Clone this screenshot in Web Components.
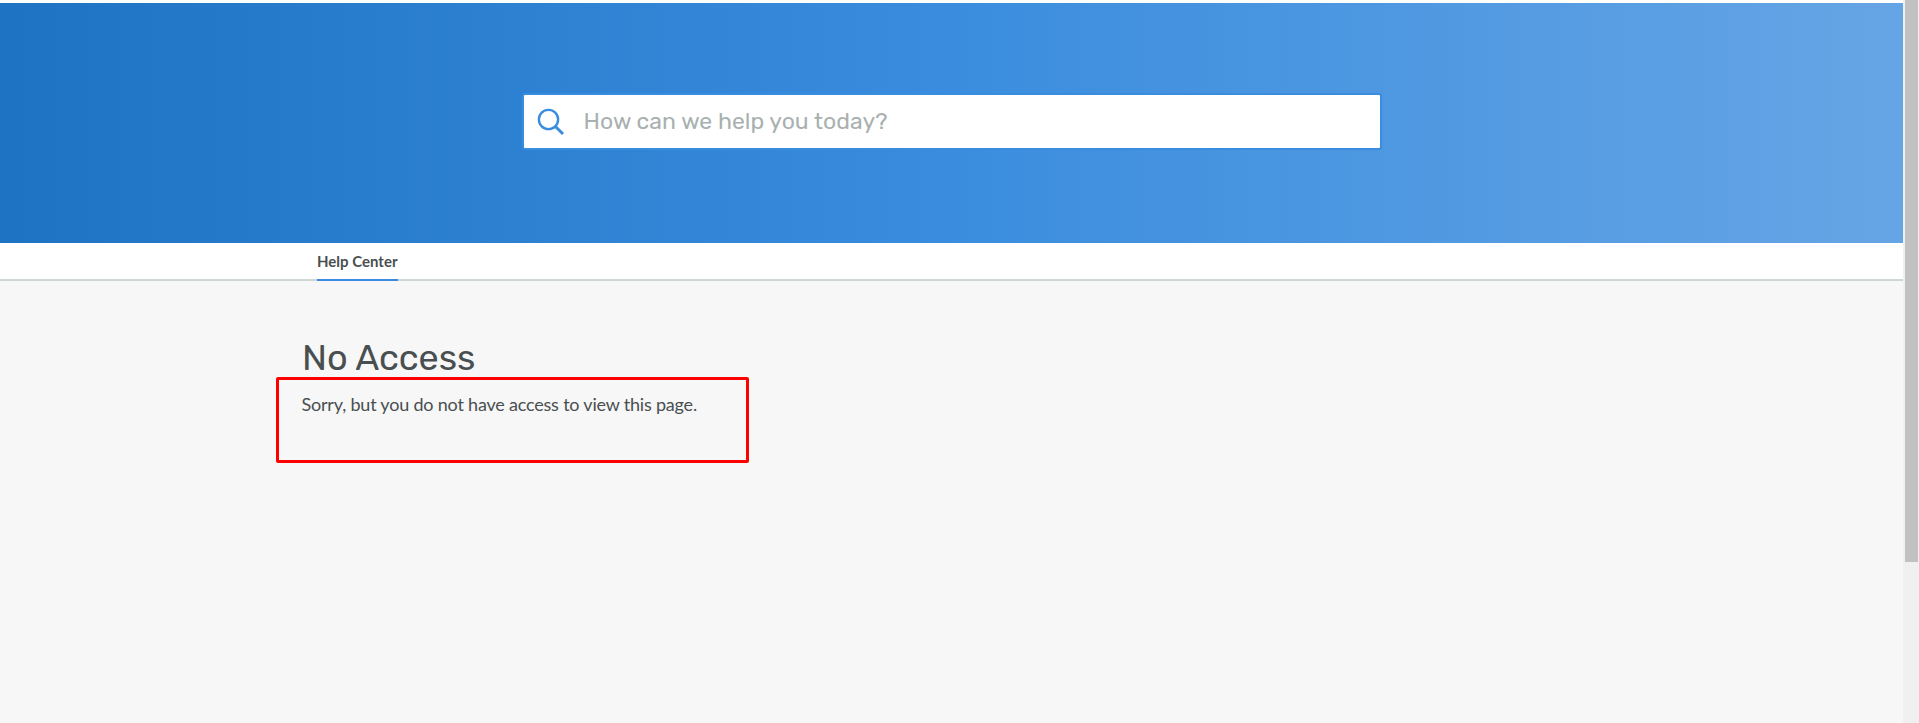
<!DOCTYPE html>
<html lang="en">
<head>
<meta charset="utf-8">
<title>Help Center</title>
<style>
html, body { margin: 0; height: 100%; overflow: hidden; background: #f7f7f7; }
</style>
</head>
<body>
<help-page></help-page>
<script>
const define = (name, html) => customElements.define(name, class extends HTMLElement {
  constructor() {
    super();
    const t = document.createElement('template');
    t.innerHTML = html;
    this.attachShadow({ mode: 'open' }).append(t.content.cloneNode(true));
  }
});

define('search-box', `<style>
:host { display: flex; box-sizing: border-box; width: 860px; height: 57px; align-items: center; background: #fff; border: 2px solid #3a8dde; border-radius: 3px; }
svg { display: block; width: 28px; height: 28px; margin-left: 13px; margin-right: 19px; flex: none; }
span { font: 23px/30px Rubik, Roboto, sans-serif; letter-spacing: .04px; color: #a8b0b0; white-space: nowrap; margin-top: -1px; }
</style>
<svg viewBox="0 0 28 28" fill="none" stroke="#3a8dde"><circle cx="11.5" cy="11.5" r="9.6" stroke-width="2.4"/><path d="M18.7 18.7L26 26" stroke-width="3"/></svg>
<span><slot></slot></span>`);

define('hero-banner', `<style>
:host { display: flex; height: 240px; box-sizing: border-box; padding-top: 90px; justify-content: center; align-items: flex-start; background: linear-gradient(90deg, #1f73c3 0%, #3a8dde 50%, #66a5e5 100%); }
</style><slot></slot>`);

define('nav-tabs', `<style>
:host { display: flex; box-sizing: border-box; height: 38px; padding-left: 317px; background: #fff; border-bottom: 2px solid #cfd6d6; }
</style><slot></slot>`);

define('nav-tab', `<style>
:host { display: block; box-sizing: border-box; height: 38px; width: 81px; padding-top: 8px; font: 700 15px/20px Lato, sans-serif; color: #494f50; border-bottom: 2px solid #3a8dde; white-space: nowrap; }
</style><slot></slot>`);

define('no-access', `<style>
:host { display: block; padding: 54px 0 0 276px; color: #494f50; }
h1 { margin: 0 0 0 26px; padding-top: 4px; font: 400 36px/38px Rubik, Roboto, sans-serif; letter-spacing: -.1px; }
p { box-sizing: border-box; width: 473px; height: 86px; margin: 0; padding: 13px 0 0 22.5px; border: 3px solid #f00; border-radius: 2px; font: 18px/22px Lato, sans-serif; letter-spacing: -.2px; white-space: nowrap; }
</style>
<h1><slot name="title"></slot></h1><p><slot></slot></p>`);

define('scroll-bar', `<style>
:host { display: block; box-sizing: border-box; width: 16px; background: #f0f0f0; padding: 0 1px 0 2px; }
div { height: 562px; background: #c1c1c1; }
</style><div></div>`);

define('help-page', `<style>
:host { display: grid; grid-template-columns: 1903px 16px; height: 723px; }
main { border-top: 3px solid #fff; min-width: 0; }
</style>
<main>
<hero-banner><search-box>How can we help you today?</search-box></hero-banner>
<nav-tabs><nav-tab>Help Center</nav-tab></nav-tabs>
<no-access><span slot="title">No Access</span>Sorry, but you do not have access to view this page.</no-access>
</main>
<scroll-bar></scroll-bar>`);
</script>
</body>
</html>
